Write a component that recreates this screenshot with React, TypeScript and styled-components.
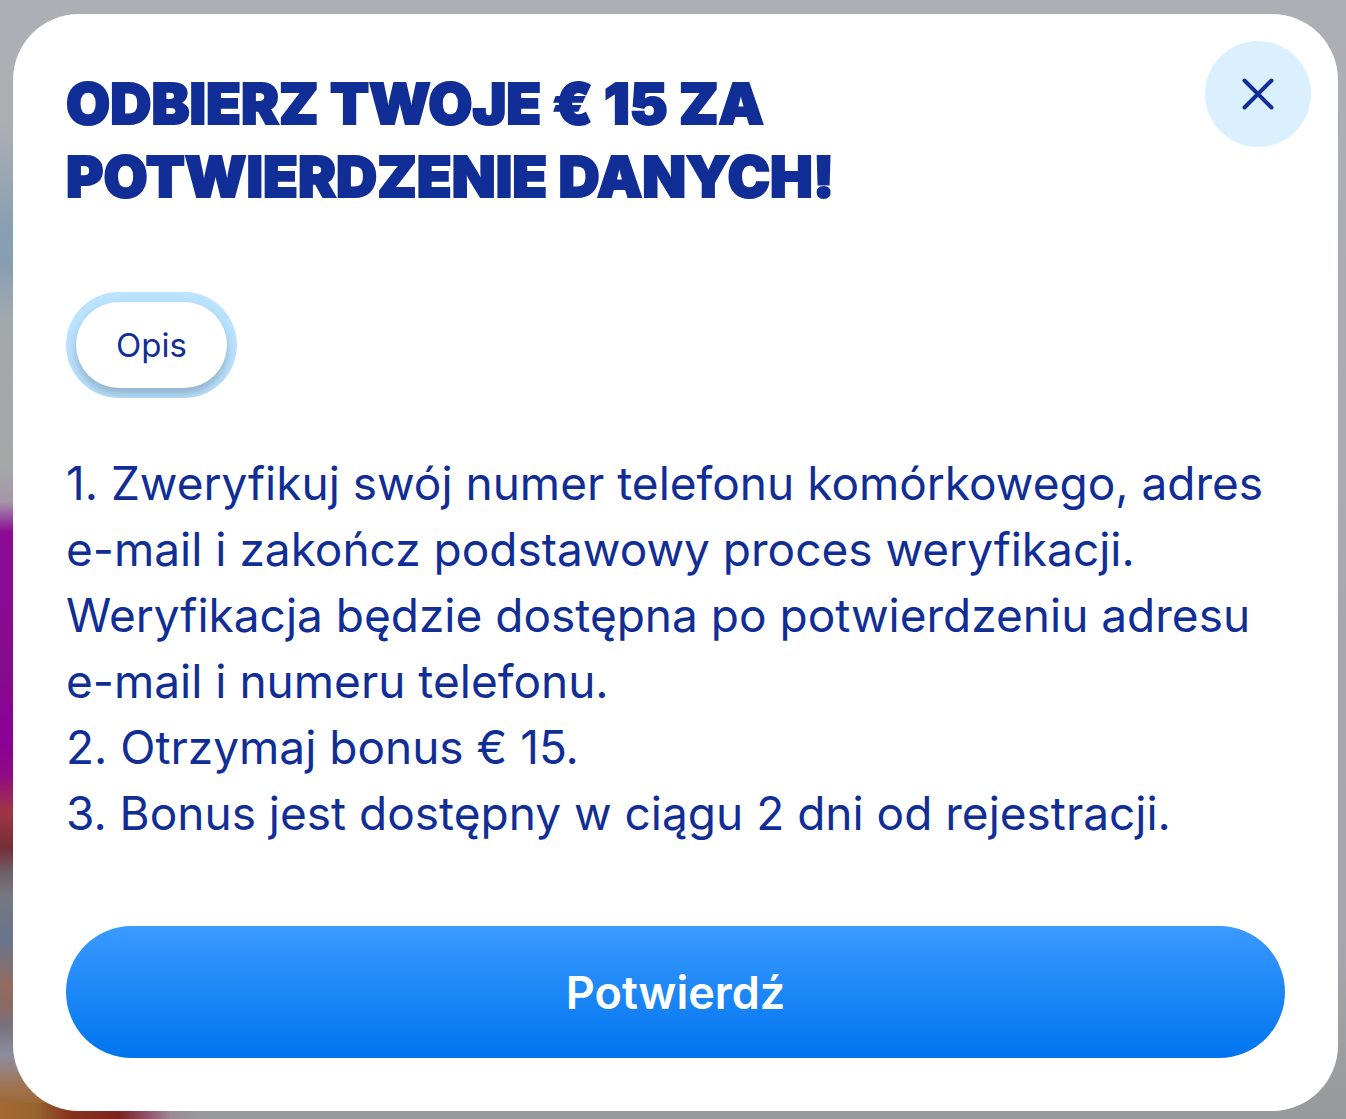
import React from "react";
import styled, { createGlobalStyle } from "styled-components";

const navy = "#112e96";

const GlobalStyle = createGlobalStyle`
  *, *::before, *::after { box-sizing: border-box; }
  body { margin: 0; font-family: Inter, "Liberation Sans", sans-serif; color: ${navy}; }
  button { font: inherit; color: inherit; border: 0; cursor: pointer; }
`;

const Backdrop = styled.div`
  min-height: 100vh;
  padding: 14px 8px 8px 13px;
  background:
    linear-gradient(to right, #a46a30 0, #98632f 36px, #88301f 72px, #7e2222 120px, #925068 146px, #9a8a94 170px, transparent 200px)
      left bottom / 100% 16px no-repeat,
    linear-gradient(to bottom, #aeafb5 0, #aeafb5 120px, #8ba0b2 220px, #879db2 260px, #a2a9ad 320px,
      #a5a6a8 470px, #a596a9 502px, #8b0b94 532px, #8b0b94 600px, #860b8d 670px, #8b0096 740px, #8f0b84 775px,
      #a03545 812px, #732f35 848px, #6f5f69 872px, #777781 895px, #67758d 940px, #936b60 985px, #8b6a62 1005px,
      #77717e 1025px, #8d8d9f 1055px, #a1714a 1090px, #98632f 1110px)
      left top / 60px 100% no-repeat,
    linear-gradient(to bottom, #aeafb5 0, #a5a5ab 85%, #98999c 100%);
`;

const Dialog = styled.main`
  padding: 53px;
  border-radius: 66px;
  background: #fff;
`;

const Header = styled.header`
  display: flex;
  justify-content: space-between;
  align-items: flex-start;
`;

const Title = styled.h1`
  margin: 0;
  font-size: 57px;
  line-height: 73px;
  font-weight: 900;
  text-transform: uppercase;
  -webkit-text-stroke: 2px ${navy};
`;

const CloseButton = styled.button`
  display: grid;
  place-items: center;
  flex: none;
  width: 106px;
  height: 106px;
  margin: -26px -26px 0 0;
  padding: 0;
  border-radius: 50%;
  background: #dbf0ff;
`;

const Tabs = styled.nav`
  display: flex;
  margin-top: 79px;
`;

const Tab = styled.button`
  padding: 10px;
  border-radius: 53px;
  background: #bae3ff;
  overflow: hidden;
`;

const TabLabel = styled.span`
  display: block;
  padding: 0 40px;
  border-radius: 43px;
  background: #fff;
  box-shadow: 0 6px 10px rgba(60, 70, 90, 0.32);
  font-size: 33px;
  line-height: 86px;
`;

const Description = styled.section`
  margin-top: 52px;
  font-size: 46px;
  line-height: 66px;
`;

const Step = styled.p`
  margin: 0;
`;

const ConfirmButton = styled.button`
  display: block;
  width: 100%;
  height: 132px;
  margin-top: 80px;
  border-radius: 66px;
  background: linear-gradient(to bottom, #3a9aff, #0074ee);
  && {
    color: #fff;
    font-size: 45px;
    font-weight: 600;
  }
`;

const steps = [
  "1. Zweryfikuj swój numer telefonu komórkowego, adres e-mail i zakończ podstawowy proces weryfikacji. Weryfikacja będzie dostępna po potwierdzeniu adresu e-mail i numeru telefonu.",
  "2. Otrzymaj bonus € 15.",
  "3. Bonus jest dostępny w ciągu 2 dni od rejestracji.",
];

export default function App() {
  return (
    <Backdrop>
      <GlobalStyle />
      <Dialog>
        <Header>
          <Title>Odbierz twoje € 15 za potwierdzenie danych!</Title>
          <CloseButton type="button" aria-label="Zamknij">
            <svg width="32" height="32" viewBox="0 0 32 32" fill="none" stroke={navy} strokeWidth="4" strokeLinecap="round">
              <path d="M2.5 2.5 29.5 29.5M29.5 2.5 2.5 29.5" />
            </svg>
          </CloseButton>
        </Header>
        <Tabs>
          <Tab type="button">
            <TabLabel>Opis</TabLabel>
          </Tab>
        </Tabs>
        <Description>
          {steps.map((step) => (
            <Step key={step}>{step}</Step>
          ))}
        </Description>
        <ConfirmButton type="button">Potwierdź</ConfirmButton>
      </Dialog>
    </Backdrop>
  );
}
